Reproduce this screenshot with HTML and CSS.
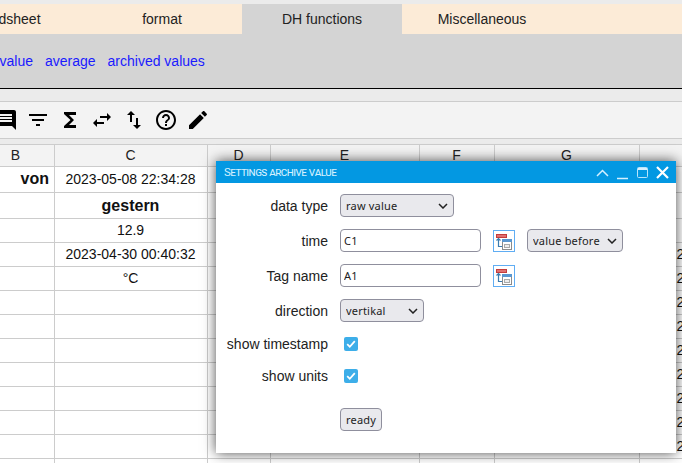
FILE: index.html
```html
<!DOCTYPE html>
<html lang="en">
<head>
<meta charset="utf-8">
<title>Settings archive value</title>
<link rel="stylesheet" href="styles.css">
</head>
<body>
<nav class="tabs">
  <div class="tab">spreadsheet</div>
  <div class="tab">format</div>
  <div class="tab tab-active">DH functions</div>
  <div class="tab">Miscellaneous</div>
</nav>
<div class="ribbon">
  <a href="#">value</a>
  <a href="#">average</a>
  <a href="#">archived values</a>
</div>
<div class="toolbar">
  <svg class="icon" viewBox="0 0 24 24"><path d="M21.99 4c0-1.1-.89-2-1.99-2H4c-1.1 0-2 .9-2 2v12c0 1.1.9 2 2 2h14l4 4-.01-18zM18 14H6v-2h12v2zm0-3H6V9h12v2zm0-3H6V6h12v2z"/></svg>
  <svg class="icon" viewBox="0 0 24 24"><path d="M10 18h4v-2h-4v2zM3 6v2h18V6H3zm3 7h12v-2H6v2z"/></svg>
  <svg class="icon" viewBox="0 0 24 24"><path d="M18 4H6v2l6.5 6L6 18v2h12v-3h-7l5-5-5-5h7z"/></svg>
  <svg class="icon" viewBox="0 0 24 24"><path d="M6.99 11L3 15l3.99 4v-3H14v-2H6.99v-3zM21 9l-3.99-4v3H10v2h7.01v3L21 9z"/></svg>
  <svg class="icon" viewBox="0 0 24 24"><path d="M16 17.01V10h-2v7.01h-3L15 21l4-3.99h-3zM9 3L5 6.99h3V14h2V6.99h3L9 3z"/></svg>
  <svg class="icon" viewBox="0 0 24 24"><path d="M11 18h2v-2h-2v2zm1-16C6.48 2 2 6.48 2 12s4.48 10 10 10 10-4.48 10-10S17.52 2 12 2zm0 18c-4.41 0-8-3.59-8-8s3.59-8 8-8 8 3.59 8 8-3.59 8-8 8zm0-14c-2.21 0-4 1.79-4 4h2c0-1.1.9-2 2-2s2 .9 2 2c0 2-3 1.75-3 5h2c0-2.25 3-2.5 3-5 0-2.21-1.79-4-4-4z"/></svg>
  <svg class="icon" viewBox="0 0 24 24"><path d="M3 17.25V21h3.75L17.81 9.94l-3.75-3.75L3 17.25zM20.71 7.04c.39-.39.39-1.02 0-1.41l-2.34-2.34c-.39-.39-1.02-.39-1.41 0l-1.83 1.83 3.75 3.75 1.83-1.83z"/></svg>
</div>
<table class="sheet">
  <colgroup>
    <col class="col-b"><col class="col-c"><col class="col-d"><col class="col-e"><col class="col-f"><col class="col-g"><col class="col-h">
  </colgroup>
  <thead>
    <tr><th>B</th><th>C</th><th>D</th><th>E</th><th>F</th><th>G</th><th></th></tr>
  </thead>
  <tbody>
    <tr class="tall"><td class="strong right">von</td><td>2023-05-08 22:34:28</td><td></td><td></td><td></td><td></td><td></td></tr>
    <tr class="tall"><td></td><td class="strong heading">gestern</td><td></td><td></td><td></td><td></td><td></td></tr>
    <tr><td></td><td>12.9</td><td></td><td></td><td></td><td></td><td></td></tr>
    <tr><td></td><td>2023-04-30 00:40:32</td><td></td><td></td><td></td><td></td><td>2023-04-30 00:40:32</td></tr>
    <tr><td></td><td>°C</td><td></td><td></td><td></td><td></td><td>2023-04-30 00:45:32</td></tr>
    <tr><td></td><td></td><td></td><td></td><td></td><td></td><td>2023-04-30 00:50:32</td></tr>
    <tr><td></td><td></td><td></td><td></td><td></td><td></td><td>2023-04-30 00:55:32</td></tr>
    <tr><td></td><td></td><td></td><td></td><td></td><td></td><td>2023-04-30 01:00:32</td></tr>
    <tr><td></td><td></td><td></td><td></td><td></td><td></td><td>2023-04-30 01:05:32</td></tr>
    <tr><td></td><td></td><td></td><td></td><td></td><td></td><td>2023-04-30 01:10:32</td></tr>
    <tr><td></td><td></td><td></td><td></td><td></td><td></td><td>2023-04-30 01:15:32</td></tr>
    <tr><td></td><td></td><td></td><td></td><td></td><td></td><td>2023-04-30 01:20:32</td></tr>
    <tr><td></td><td></td><td></td><td></td><td></td><td></td><td></td></tr>
  </tbody>
</table>

<section class="dialog">
  <header class="titlebar">
    <span class="title">Settings archive value</span>
    <svg class="win-icons" width="76" height="22" viewBox="0 0 76 22">
      <path class="wi-thin" d="M2 15l5.5-5.5L13 15"/>
      <path class="wi-thin" d="M22 17.5h11"/>
      <rect class="wi-box" x="42.5" y="6.5" width="10" height="10" rx="1"/>
      <path class="wi-bar" d="M43 8h9"/>
      <path class="wi-x" d="M62 6l11 11M73 6L62 17"/>
    </svg>
  </header>
  <form class="form">
    <div class="row">
      <label class="lab">data type</label>
      <select class="sel sel-type"><option>raw value</option></select>
    </div>
    <div class="row">
      <label class="lab">time</label>
      <input class="txt" type="text" value="C1">
      <button class="pick" type="button">
        <svg width="20" height="20" viewBox="0 0 20 20"><rect class="p-red" x="2.5" y="3.5" width="10" height="3"/><path class="p-tree" d="M4.5 8v7.5H8M2.5 9.5l2-2 2 2"/><rect class="p-win" x="8.5" y="8.5" width="9" height="10"/><rect class="p-head" x="8" y="8" width="10" height="3"/><rect class="p-in" x="10.5" y="13.5" width="5" height="3"/></svg>
      </button>
      <select class="sel sel-before"><option>value before</option></select>
    </div>
    <div class="row">
      <label class="lab">Tag name</label>
      <input class="txt" type="text" value="A1">
      <button class="pick" type="button">
        <svg width="20" height="20" viewBox="0 0 20 20"><rect class="p-red" x="2.5" y="3.5" width="10" height="3"/><path class="p-tree" d="M4.5 8v7.5H8M2.5 9.5l2-2 2 2"/><rect class="p-win" x="8.5" y="8.5" width="9" height="10"/><rect class="p-head" x="8" y="8" width="10" height="3"/><rect class="p-in" x="10.5" y="13.5" width="5" height="3"/></svg>
      </button>
    </div>
    <div class="row">
      <label class="lab">direction</label>
      <select class="sel sel-dir"><option>vertikal</option></select>
    </div>
    <div class="row row-check">
      <label class="lab">show timestamp</label>
      <input class="chk" type="checkbox" checked>
    </div>
    <div class="row row-check">
      <label class="lab">show units</label>
      <input class="chk" type="checkbox" checked>
    </div>
    <div class="row row-ready">
      <span class="lab"></span>
      <button class="ready" type="button">ready</button>
    </div>
  </form>
</section>
</body>
</html>
```
FILE: styles.css
```css
* { box-sizing: border-box; }
html, body { height: 100%; }
body {
  margin: 0;
  overflow: hidden;
  background: #ebebeb;
  font-family: "Liberation Sans", Arial, sans-serif;
  font-size: 14px;
  color: #222;
  padding-top: 4px;
  position: relative;
  width: 682px;
  height: 463px;
}
.tabs {
  display: flex;
  height: 30px;
  margin-left: -78px;
  width: 760px;
  background: #fcebd7;
}
.tab {
  flex: 0 0 160px;
  text-align: center;
  line-height: 30px;
}
.tab-active { background: #d4d4d4; }
.ribbon {
  display: flex;
  gap: 12px;
  align-items: center;
  height: 55px;
  background: #d4d4d4;
  border-bottom: 1px solid #000;
  padding-bottom: 1px;
}
.ribbon a { color: #1a1aff; text-decoration: none; }
.ribbon a:first-child { margin-left: -.5px; }
.toolbar {
  display: flex;
  gap: 8px;
  align-items: center;
  height: 38px;
  margin-top: 12px;
  background: #f3f3f3;
  border-top: 1px solid #ccc;
  border-bottom: 1px solid #ccc;
  overflow: hidden;
}
.icon { flex: 0 0 24px; width: 24px; height: 24px; fill: #000; }
.icon:first-child { margin-left: -6px; }
.sheet {
  margin: 5px 0 0 -22px;
  table-layout: fixed;
  width: 867px;
  border-collapse: separate;
  border-spacing: 0;
  background: #fff;
}
.col-b { width: 77px; }
.col-c { width: 153px; }
.col-d { width: 63px; }
.col-e { width: 149px; }
.col-f { width: 75px; }
.col-g { width: 145px; }
.col-h { width: 205px; }
.sheet th {
  height: 23px;
  padding: 0 1px 2px 0;
  font-weight: 400;
  background: #f3f3f3;
  border-top: 1px solid #ccc;
  border-right: 1px solid #ccc;
  border-bottom: 1px solid #ccc;
}
.sheet td {
  height: 24px;
  padding: 0 5px 2px 4px;
  text-align: center;
  white-space: nowrap;
  overflow: hidden;
  color: #111;
  border-right: 1px solid #ccc;
  border-bottom: 1px solid #ccc;
}
.sheet .tall td { height: 26px; }
.sheet .strong { font-weight: 700; font-size: 16px; }
.sheet .heading { padding-bottom: 0; }
.sheet .right { text-align: right; }

.dialog {
  position: absolute;
  left: 216px;
  top: 161px;
  width: 460px;
  height: 292px;
  background: #fff;
  box-shadow: 0 0 12px rgba(0, 0, 0, .7);
}
.titlebar {
  display: flex;
  align-items: center;
  justify-content: space-between;
  height: 22px;
  padding: 0 5px 0 8px;
  background: #0398e2;
}
.title {
  font-family: Roboto, sans-serif;
  font-size: 11.5px;
  letter-spacing: -.5px;
  font-variant: small-caps;
  color: #d5f0ff;
}
.win-icons { display: block; }
.wi-thin { fill: none; stroke: #d5f0ff; stroke-width: 1.5; }
.wi-box { fill: none; stroke: #b8e4fb; stroke-width: 1; }
.wi-bar { stroke: #d5f0ff; stroke-width: 2; }
.wi-x { fill: none; stroke: #fff; stroke-width: 2.2; }
.form { padding-top: 11px; }
.row {
  display: flex;
  align-items: center;
  gap: 12px;
  height: 23px;
  margin-bottom: 12px;
}
.row-check { height: 20px; }
.row-ready { margin-top: 22px; }
.lab {
  flex: 0 0 112px;
  text-align: right;
  color: #222;
}
.sel, .txt, .ready {
  height: 23px;
  font-family: "Noto Sans", sans-serif;
  font-size: 11px;
  letter-spacing: .2px;
  color: #222;
  border: 1px solid #8f8f9d;
  border-radius: 4px;
  margin: 0;
}
.sel {
  appearance: none;
  -webkit-appearance: none;
  padding: 0 0 0 5px;
  background: #e9e9ed url("data:image/svg+xml,%3Csvg xmlns='http://www.w3.org/2000/svg' width='10' height='6' viewBox='0 0 10 6'%3E%3Cpath d='M1 1l4 4 4-4' fill='none' stroke='%23222' stroke-width='1.5'/%3E%3C/svg%3E") no-repeat right 5px center;
}
.sel-type { width: 114px; }
.sel-before { width: 96px; }
.sel-dir { width: 84px; }
.txt { width: 141px; padding: 0 3px; background: #fff; outline: 0; }
.pick {
  width: 22px;
  height: 22px;
  padding: 0;
  border: 1px solid #60adf3;
  background: #fff;
  display: block;
}
.pick svg { display: block; }
.p-red { fill: #e07070; stroke: #c43c3c; stroke-width: 1; }
.p-tree { fill: none; stroke: #3b7cb0; stroke-width: 1.2; }
.p-win { fill: #fff; stroke: #8b8b8b; stroke-width: 1; }
.p-head { fill: #5a97d0; }
.p-in { fill: #eee; stroke: #aaa; stroke-width: 1; }
.chk {
  appearance: none;
  -webkit-appearance: none;
  width: 14px;
  height: 14px;
  margin: 0 0 0 4px;
  border-radius: 2px;
  background: #3daee9 url("data:image/svg+xml,%3Csvg xmlns='http://www.w3.org/2000/svg' width='14' height='14' viewBox='0 0 14 14'%3E%3Cpath d='M3.2 7.2l2.6 2.6 5-5.6' fill='none' stroke='%23fff' stroke-width='1.8'/%3E%3C/svg%3E") no-repeat center;
}
.ready {
  width: 42px;
  padding: 0;
  background: #e9e9ed;
  text-align: center;
}
```
